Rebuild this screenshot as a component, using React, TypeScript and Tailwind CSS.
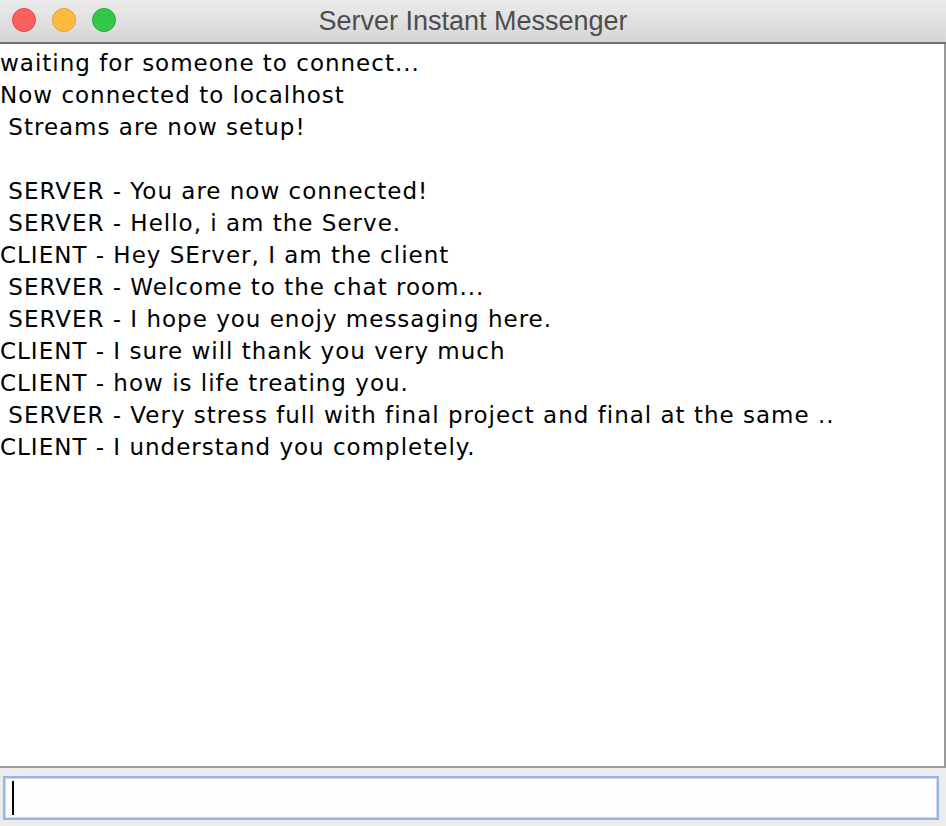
const lines = [
  'waiting for someone to connect...',
  'Now connected to localhost',
  ' Streams are now setup!',
  '',
  ' SERVER - You are now connected!',
  ' SERVER - Hello, i am the Serve.',
  'CLIENT - Hey SErver, I am the client',
  ' SERVER - Welcome to the chat room...',
  ' SERVER - I hope you enojy messaging here.',
  'CLIENT - I sure will thank you very much',
  'CLIENT - how is life treating you.',
  ' SERVER - Very stress full with final project and final at the same ..',
  'CLIENT - I understand you completely.',
];

export default function App() {
  return (
    <div className="w-[946px] h-[826px] flex flex-col bg-[#ececec] overflow-hidden">
      {/* title bar */}
      <div className="h-[44px] shrink-0 relative flex items-center justify-center bg-gradient-to-b from-[#ebebeb] to-[#d6d6d6] border-b-2 border-[#6f6f6f]">
        <div className="absolute left-[12px] top-[8px] flex gap-[16px]">
          <span className="w-[24px] h-[24px] rounded-full bg-[#fc605c] border border-[#de4a45]" />
          <span className="w-[24px] h-[24px] rounded-full bg-[#fdbc40] border border-[#dea134]" />
          <span className="w-[24px] h-[24px] rounded-full bg-[#34c84a] border border-[#27aa35]" />
        </div>
        <span className="text-[27px] leading-none text-[#4d4d4d] font-['Liberation_Sans',Arial,sans-serif]">
          Server Instant Messenger
        </span>
      </div>

      {/* chat log */}
      <div className="h-[724px] shrink-0 bg-white border-r-2 border-b-2 border-[#999999] pt-[3px] font-['DejaVu_Sans',sans-serif] text-[23px] tracking-[1px] leading-[32px] text-black">
        {lines.map((l, i) => (
          <div key={i} className="whitespace-pre h-[32px]">{l}</div>
        ))}
      </div>

      {/* input */}
      <div className="flex-1 px-[3px] pt-[8px]">
        <div className="w-[936px] h-[44px] bg-[#fdfdfd] border-2 border-[#8cb8ee] shadow-[inset_0_0_0_1px_#d8d8d8] flex items-center pl-[7px]">
          <span className="w-[2px] h-[34px] bg-black" />
        </div>
      </div>
    </div>
  );
}
